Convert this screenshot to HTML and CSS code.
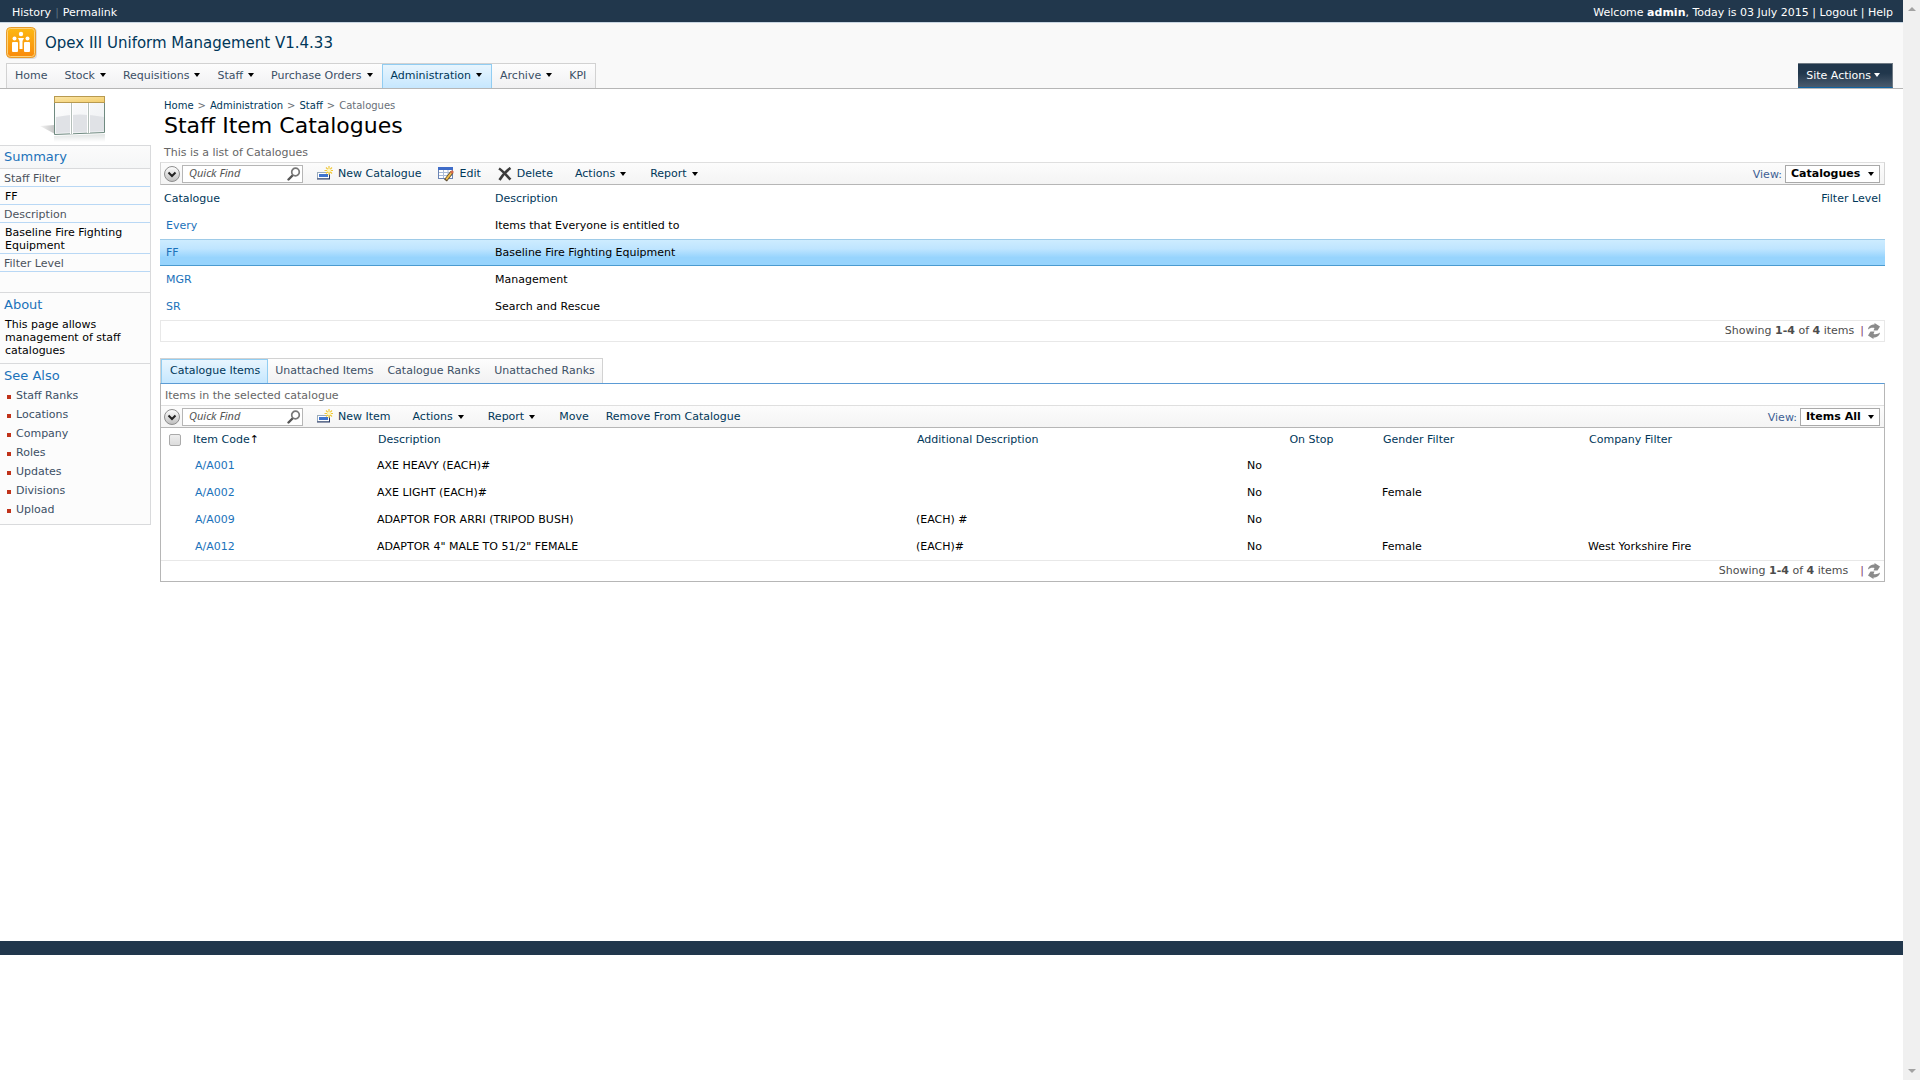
FILE: index.html
```
<!DOCTYPE html>
<html lang="en">
<head>
  <meta charset="UTF-8" />
  <meta name="viewport" content="width=device-width, initial-scale=1.0"/>
  <title>Staff Item Catalogues</title>
  <link rel="stylesheet" href="styles.css">
</head>
<body>
  <!-- shared icons -->
  <svg class="icon-defs" width="0" height="0" aria-hidden="true">
    <defs>
      <linearGradient id="orange" x1="0" y1="0" x2="0" y2="1">
        <stop offset="0" stop-color="#fdb913"/>
        <stop offset="1" stop-color="#f98a0c"/>
      </linearGradient>
      <linearGradient id="gold" x1="0" y1="0" x2="1" y2="1">
        <stop offset="0" stop-color="#fbe6a8"/>
        <stop offset="1" stop-color="#f3cd6c"/>
      </linearGradient>
      <linearGradient id="pane" x1="0" y1="0" x2="1" y2="1">
        <stop offset="0" stop-color="#ffffff"/>
        <stop offset="1" stop-color="#eceef1"/>
      </linearGradient>
      <linearGradient id="shade" x1="1" y1="0" x2="0" y2="0">
        <stop offset="0" stop-color="#c4c4c4"/>
        <stop offset="1" stop-color="#f4f4f4"/>
      </linearGradient>
      <linearGradient id="mirror" x1="0" y1="0" x2="0" y2="1">
        <stop offset="0" stop-color="#dfe3e2"/>
        <stop offset="1" stop-color="#ffffff"/>
      </linearGradient>
      <linearGradient id="ball" x1="0" y1="0" x2="0" y2="1">
        <stop offset="0" stop-color="#ffffff"/>
        <stop offset="1" stop-color="#bdbdbd"/>
      </linearGradient>
    </defs>
    <symbol id="i-find" viewBox="0 0 14 14">
      <path d="M1.500 12.500L6 8" stroke="#555" stroke-width="2.400" stroke-linecap="round"/>
      <circle cx="8.500" cy="5" r="3.800" fill="#fff" stroke="#777" stroke-width="1.700"/>
    </symbol>
    <symbol id="i-new" viewBox="0 0 16 16">
      <rect x="0.500" y="6.500" width="12" height="6" fill="#fff" stroke="#9ab"/>
      <path d="M0 13h13M12.500 8v5" stroke="#2a3a66" stroke-width="1"/>
      <rect x="2" y="8" width="9" height="3" fill="#3f74cf"/>
      <path d="M12 0v9M7.500 4.500h9M9 1.500l6 6M15 1.500l-6 6" stroke="#f0c83c" stroke-width="1.200"/>
      <circle cx="12" cy="4.500" r="2" fill="#fff7c0"/>
    </symbol>
    <symbol id="i-edit" viewBox="0 0 16 16">
      <rect x="0.500" y="1.500" width="14" height="11" fill="#fff" stroke="#6a84b4"/>
      <path d="M0 2.500h15" stroke="#3f6cc8" stroke-width="3"/>
      <path d="M1 6.500h13M1 9.500h13M5.500 4v8M10 4v8" stroke="#a9bbd8"/>
      <path d="M7.500 14.500L14 6" stroke="#5a4a30" stroke-width="3.600"/>
      <path d="M8.200 13.500L14 6" stroke="#f2bf4c" stroke-width="2"/>
      <path d="M13 7l2-2" stroke="#d4694c" stroke-width="2.600"/>
    </symbol>
    <symbol id="i-delete" viewBox="0 0 14 14">
      <path d="M1 1.500C5 4 9 9 12.500 12.500M12.500 1C8 4 4 9 1.500 13" stroke="#3c3c3c" stroke-width="2.600" fill="none"/>
    </symbol>
    <symbol id="i-more" viewBox="0 0 16 16">
      <circle cx="8" cy="8" r="7.500" fill="url(#ball)" stroke="#8e8e8e"/>
      <path d="M4.500 6.500L8 10l3.500-3.500" stroke="#222" stroke-width="2" fill="none"/>
    </symbol>
    <symbol id="i-refresh" viewBox="0 0 12 16">
      <path d="M0 6.500C0.500 3 3 1.500 6.500 1.500V0L12 3.500 9.500 7.500H5.500L6.500 5C4 4.500 2 5 0 6.500z" fill="#8b8b8b"/>
      <path d="M12 9.500c-0.500 3.500-3 5-6.500 5V16L0 12.500 2.500 8.500h4L5.500 11c2.500 0.500 4.500 0 6.500-1.500z" fill="#8b8b8b"/>
    </symbol>
  </svg>

  <div class="page">
    <div class="topbar">
      <div><a href="#">History</a><span class="bar">|</span><a href="#">Permalink</a></div>
      <div>Welcome <b>admin</b>, Today is 03 July 2015 | <a href="#">Logout</a> | <a href="#">Help</a></div>
    </div>

    <header class="header">
      <div class="brand">
        <svg width="32" height="32" viewBox="0 0 32 32" aria-hidden="true">
          <rect x="1" y="1" width="30" height="31" rx="4" fill="#ddd"/>
          <rect x="0.500" y="0.500" width="29" height="30" rx="4" fill="url(#orange)" stroke="#e89a2a"/>
          <rect x="1.500" y="1.500" width="27" height="28" rx="3" fill="none" stroke="#fdd37a"/>
          <g fill="#fff">
            <circle cx="8.500" cy="11.500" r="2"/><circle cx="15" cy="7" r="2.200"/><circle cx="21.500" cy="11.500" r="2"/>
            <rect x="6" y="15" width="6" height="10" rx="1"/><rect x="18" y="15" width="6" height="10" rx="1"/>
            <path d="M12 11h6l-1.500 3v8h-3v-8z"/>
          </g>
        </svg>
        <span>Opex III Uniform Management V1.4.33</span>
      </div>
      <div class="navrow">
        <nav class="nav">
          <a href="#">Home</a>
          <a href="#" class="drop">Stock</a>
          <a href="#" class="drop">Requisitions</a>
          <a href="#" class="drop">Staff</a>
          <a href="#" class="drop">Purchase Orders</a>
          <a href="#" class="drop active">Administration</a>
          <a href="#" class="drop">Archive</a>
          <a href="#">KPI</a>
        </nav>
        <button type="button" class="site-actions drop">Site Actions</button>
      </div>
    </header>

    <div class="content">
      <aside class="side">
        <div class="side-pic">
          <svg width="66" height="50" viewBox="0 0 66 50" aria-hidden="true">
            <path d="M0 31l15-1v9z" fill="url(#shade)"/>
            <path d="M14 41l51-2v8H14z" fill="url(#mirror)"/>
            <path d="M14.500 1.500h50v36l-50 2z" fill="url(#pane)" stroke="#6f8a80"/>
            <path d="M16 22q24-5 48 0v14l-48 2z" fill="#e0e2e6"/>
            <path d="M31.500 8v31M48.500 8v30" stroke="#fff" stroke-width="3"/>
            <path d="M31.500 8v31M48.500 8v30" stroke="#b4bfba"/>
            <rect x="14.500" y="1.500" width="50" height="6" fill="url(#gold)" stroke="#b89a50"/>
          </svg>
        </div>
        <div class="side-box">
          <h2 class="shaded">Summary</h2>
          <dl>
            <dt>Staff Filter</dt>
            <dd>FF</dd>
            <dt>Description</dt>
            <dd>Baseline Fire Fighting Equipment</dd>
            <dt>Filter Level</dt>
            <dd class="empty"></dd>
          </dl>
          <h2>About</h2>
          <p>This page allows management of staff catalogues</p>
          <h2>See Also</h2>
          <ul>
            <li><a href="#">Staff Ranks</a></li>
            <li><a href="#">Locations</a></li>
            <li><a href="#">Company</a></li>
            <li><a href="#">Roles</a></li>
            <li><a href="#">Updates</a></li>
            <li><a href="#">Divisions</a></li>
            <li><a href="#">Upload</a></li>
          </ul>
        </div>
      </aside>

      <main class="main">
        <div class="crumbs">
          <a href="#">Home</a><i>&gt;</i><a href="#">Administration</a><i>&gt;</i><a href="#">Staff</a><i>&gt;</i><span>Catalogues</span>
        </div>
        <h1>Staff Item Catalogues</h1>
        <p class="desc">This is a list of Catalogues</p>

        <div class="toolbar boxed">
          <button type="button" class="more" aria-label="Search options"><svg width="16" height="16"><use href="#i-more"/></svg></button>
          <div class="find">
            <input type="text" placeholder="Quick Find" aria-label="Quick find catalogues">
            <button type="button" aria-label="Find"><svg width="14" height="14"><use href="#i-find"/></svg></button>
          </div>
          <button type="button" class="tool near"><svg width="16" height="16"><use href="#i-new"/></svg>New Catalogue</button>
          <button type="button" class="tool near"><svg width="16" height="16"><use href="#i-edit"/></svg>Edit</button>
          <button type="button" class="tool"><svg width="14" height="14"><use href="#i-delete"/></svg>Delete</button>
          <button type="button" class="tool menu drop">Actions</button>
          <button type="button" class="tool menu drop">Report</button>
          <label class="view" for="catView">View:</label>
          <div class="pick drop">
            <select id="catView"><option>Catalogues</option></select>
          </div>
        </div>

        <table class="grid catalogues">
          <colgroup><col class="c-cat"><col><col class="c-level"></colgroup>
          <thead>
            <tr><th>Catalogue</th><th>Description</th><th class="right">Filter Level</th></tr>
          </thead>
          <tbody>
            <tr><td><a href="#">Every</a></td><td>Items that Everyone is entitled to</td><td></td></tr>
            <tr class="selected"><td><a href="#">FF</a></td><td>Baseline Fire Fighting Equipment</td><td></td></tr>
            <tr><td><a href="#">MGR</a></td><td>Management</td><td></td></tr>
            <tr><td><a href="#">SR</a></td><td>Search and Rescue</td><td></td></tr>
          </tbody>
        </table>
        <div class="pager boxed">
          <span>Showing <b>1-4</b> of <b>4</b> items</span>
          <span class="sep">|</span>
          <button type="button" aria-label="Refresh"><svg width="12" height="16"><use href="#i-refresh"/></svg></button>
        </div>

        <div class="tabs">
          <a href="#" class="active">Catalogue Items</a>
          <a href="#">Unattached Items</a>
          <a href="#">Catalogue Ranks</a>
          <a href="#">Unattached Ranks</a>
        </div>
        <div class="panel">
          <p class="desc">Items in the selected catalogue</p>
          <div class="toolbar">
            <button type="button" class="more" aria-label="Search options"><svg width="16" height="16"><use href="#i-more"/></svg></button>
            <div class="find">
              <input type="text" placeholder="Quick Find" aria-label="Quick find items">
              <button type="button" aria-label="Find"><svg width="14" height="14"><use href="#i-find"/></svg></button>
            </div>
            <button type="button" class="tool"><svg width="16" height="16"><use href="#i-new"/></svg>New Item</button>
            <button type="button" class="tool menu drop">Actions</button>
            <button type="button" class="tool menu drop">Report</button>
            <button type="button" class="tool near">Move</button>
            <button type="button" class="tool">Remove From Catalogue</button>
            <label class="view" for="itemView">View:</label>
            <div class="pick drop">
              <select id="itemView"><option>Items All</option></select>
            </div>
          </div>

          <table class="grid items">
            <colgroup><col class="c-check"><col class="c-code"><col class="c-desc"><col class="c-add"><col class="c-stop"><col class="c-gender"><col></colgroup>
            <thead>
              <tr>
                <th><input type="checkbox" aria-label="Select all items"></th>
                <th>Item Code<span class="sort">↑</span></th>
                <th>Description</th>
                <th>Additional Description</th>
                <th class="center">On Stop</th>
                <th>Gender Filter</th>
                <th>Company Filter</th>
              </tr>
            </thead>
            <tbody>
              <tr><td></td><td><a href="#">A/A001</a></td><td>AXE HEAVY (EACH)#</td><td></td><td>No</td><td></td><td></td></tr>
              <tr><td></td><td><a href="#">A/A002</a></td><td>AXE LIGHT (EACH)#</td><td></td><td>No</td><td>Female</td><td></td></tr>
              <tr><td></td><td><a href="#">A/A009</a></td><td>ADAPTOR FOR ARRI (TRIPOD BUSH)</td><td>(EACH) #</td><td>No</td><td></td><td></td></tr>
              <tr><td></td><td><a href="#">A/A012</a></td><td>ADAPTOR 4" MALE TO 51/2" FEMALE</td><td>(EACH)#</td><td>No</td><td>Female</td><td>West Yorkshire Fire</td></tr>
            </tbody>
          </table>
          <div class="pager">
            <span>Showing <b>1-4</b> of <b>4</b> items</span>
            <span class="sep wide">|</span>
            <button type="button" aria-label="Refresh"><svg width="12" height="16"><use href="#i-refresh"/></svg></button>
          </div>
        </div>
      </main>
    </div>

    <footer class="footer"></footer>
  </div>

  <div class="scroll">
    <span class="up"></span>
    <span class="down"></span>
  </div>
</body>
</html>
```
FILE: styles.css
```
* {
  box-sizing: border-box;
}
body {
  margin: 0;
  display: flex;
  min-height: 100vh;
  background: #fff;
  color: #000;
  font: 11px/14px Verdana, "DejaVu Sans", sans-serif;
}
a {
  color: inherit;
  text-decoration: none;
}
h1, h2, p, ul, dl, dd {
  margin: 0;
  padding: 0;
  font-weight: normal;
}
button, input, select {
  font: inherit;
  color: inherit;
  margin: 0;
  padding: 0;
  border: 0;
  background: none;
}
svg {
  display: block;
}
.icon-defs {
  position: absolute;
}
.page {
  flex: 1;
  min-width: 0;
}

/* small black triangle after menus */
.drop::after {
  content: "";
  display: inline-block;
  border: 3px solid transparent;
  border-top: 4px solid #000;
  border-bottom: 0;
  margin-left: 5px;
  vertical-align: 2px;
}

/* top */
.topbar {
  display: flex;
  justify-content: space-between;
  height: 22px;
  padding: 0 10px 0 12px;
  line-height: 25px;
  background: #21374c;
  color: #fff;
}
.topbar .bar {
  color: #5d6f80;
  margin: 0 4px;
}
.header {
  height: 67px;
  display: flex;
  flex-direction: column;
  justify-content: space-between;
  background: #f9f9f9;
  border-top: 1px solid #c9d6e2;
  border-bottom: 1px solid #b6b6b6;
}
.brand {
  display: flex;
  align-items: center;
  gap: 7px;
  height: 40px;
  padding: 0 6px;
  font-size: 15px;
  color: #003759;
}
.navrow {
  display: flex;
  justify-content: space-between;
  padding: 0 10px 0 6px;
}
.nav, .tabs {
  display: flex;
  width: max-content;
  height: 25px;
  line-height: 23px;
  color: #3b4f65;
  border: 1px solid #d2d2d2;
  border-bottom: 0;
  background: linear-gradient(#fdfdfd, #f1f1f2);
}
.nav a {
  padding: 0 9px 0 8px;
}
.nav .active, .tabs .active {
  color: #003759;
  border: solid #91cdf2;
  border-width: 1px 1px 0;
  line-height: 21px;
  background: linear-gradient(#e8f5fe, #c6e7fe);
}
.site-actions {
  height: 25px;
  padding: 0 12px 0 8px;
  color: #fff;
  background: linear-gradient(#21374c 40%, #4a5b6d);
  border: solid #6f7a84;
  border-width: 1px 1px 0 0;
  border-bottom: 1px solid #0f63a0;
}
.site-actions::after {
  border-top-color: #fff;
  margin-left: 3px;
}

/* content */
.content {
  display: flex;
  align-items: flex-start;
  min-height: calc(100vh - 228px);
}
.side {
  width: 151px;
}
.side-pic {
  height: 56px;
  padding: 6px 0 0 40px;
}
.side-box {
  border: solid #d9dadc;
  border-width: 1px 1px 1px 0;
  background: #fcfcfc;
  color: #000;
  line-height: 13px;
}
.side h2 {
  padding: 3px 4px 0;
  font-size: 13px;
  line-height: 18px;
  color: #1b72ba;
  border-top: 1px solid #d9dadc;
}
.side .shaded {
  height: 23px;
  padding-top: 2px;
  border-top: 0;
  border-bottom: 1px solid #d9dadc;
  background: linear-gradient(#fbfbfb, #f5f6f7);
}
.side dt, .side dd {
  padding: 3px 4px 1px;
  border-bottom: 1px solid #b9d8f5;
}
.side dt {
  color: #4c535c;
}
.side dd {
  padding-left: 5px;
}
.side dd.empty {
  height: 20px;
  border: 0;
}
.side p {
  padding: 4px 5px 6px;
}
.side ul {
  list-style: none;
  padding: 1px 0 5px;
}
.side li {
  display: flex;
  align-items: center;
  gap: 5px;
  height: 19px;
  padding-left: 7px;
  color: #3b4f65;
}
.side li::before {
  content: "";
  width: 4px;
  height: 4px;
  margin-top: 2px;
  background: #c0321a;
}
.main {
  flex: 1;
  min-width: 0;
  padding: 10px 18px 0 9px;
}
.crumbs {
  padding: 0 4px;
  font-size: 10px;
  color: #003759;
}
.crumbs i {
  font-style: normal;
  color: #6b6f74;
  margin: 0 4px;
}
.crumbs span {
  color: #697079;
}
h1 {
  padding: 0 4px;
  font-size: 22px;
  line-height: 25px;
}
.desc {
  color: #666;
  padding: 8px 4px 2px;
}

/* toolbars */
.toolbar {
  display: flex;
  align-items: center;
  height: 23px;
  padding: 0 4px 0 3px;
  color: #003759;
  background: linear-gradient(#fcfcfc, #f4f4f4);
  border-top: 1px solid #dfdfdf;
  border-bottom: 1px solid #b6b6b6;
}
.toolbar.boxed {
  border-left: 1px solid #d4d4d4;
  border-right: 1px solid #d4d4d4;
}
.find {
  display: flex;
  align-items: center;
  width: 121px;
  height: 18px;
  margin: 0 14px 0 2px;
  border: 1px solid #b6b6b6;
  background: #fff;
}
.find input {
  flex: 1;
  min-width: 0;
  height: 16px;
  padding: 0 0 2px 6px;
  font: italic 11px "Noto Sans", sans-serif;
  outline: 0;
}
.find input::placeholder {
  color: #555;
}
.find button {
  margin-right: 1px;
}
.tool {
  display: flex;
  align-items: center;
  gap: 5px;
  margin-right: 22px;
}
.tool.near {
  margin-right: 17px;
}
.tool.menu {
  gap: 0;
  margin-right: 24px;
}
.view {
  margin-left: auto;
  padding: 2px 3px 0 0;
  color: #3d5f94;
}
.pick {
  position: relative;
  height: 18px;
  border: 1px solid #a9a9a9;
  background: #fff;
}
.pick select {
  appearance: none;
  display: block;
  height: 16px;
  padding: 0 18px 0 5px;
  font-weight: bold;
  color: #000;
}
.pick::after {
  position: absolute;
  right: 5px;
  top: 6px;
  pointer-events: none;
}

/* tables */
.grid {
  width: 100%;
  table-layout: fixed;
  border-spacing: 0;
}
.grid th {
  height: 27px;
  padding: 0 4px;
  font-weight: normal;
  text-align: left;
  color: #003759;
}
.grid td {
  height: 27px;
  padding: 1px 3px 0;
}
.grid td a {
  color: #1b72ba;
}
.grid .right {
  text-align: right;
}
.grid .center {
  text-align: center;
}
.grid.items th {
  height: 24px;
}
.catalogues td {
  padding: 1px 4px 0;
}
.catalogues td:first-child, .items td:nth-child(2) {
  padding-left: 6px;
}
.selected td {
  background: linear-gradient(#cdecff, #bfe5ff 35%, #97d4fd 70%, #97d4fd);
  border-top: 1px solid #9ecbe8;
  border-bottom: 1px solid #4b9bd0;
}
.c-cat { width: 331px; }
.c-level { width: 120px; }
.c-check { width: 28px; }
.c-code { width: 185px; }
.c-desc { width: 539px; }
.c-add { width: 331px; }
.c-stop { width: 135px; }
.c-gender { width: 206px; }
.grid input {
  appearance: none;
  display: block;
  width: 12px;
  height: 12px;
  margin: 0 4px;
  border: 1px solid #aaa;
  border-radius: 2px;
  background: linear-gradient(#eee, #dcdcdc);
}
.sort {
  color: #000;
}
.pager {
  display: flex;
  justify-content: flex-end;
  align-items: center;
  height: 21px;
  padding-right: 4px;
  color: #4c4c4c;
  border-top: 1px solid #e8e8e8;
}
.pager.boxed {
  height: 22px;
  border: 1px solid #e8e8e8;
}
.pager .sep {
  color: #7a3c6e;
  margin: 0 4px 0 6px;
}
.pager .wide {
  margin-left: 12px;
}

/* lower panel */
.tabs {
  margin-top: 16px;
}
.tabs a {
  padding: 0 7px 0 8px;
}
.tabs a + a {
  padding-left: 7px;
}
.panel {
  border: 1px solid #b6b6b6;
  border-top-color: #5b9bd5;
}
.panel .desc {
  padding: 5px 4px 2px;
}
.footer {
  height: 14px;
  background: #21374c;
}

/* scroll gutter */
.scroll {
  display: flex;
  flex-direction: column;
  justify-content: space-between;
  align-items: center;
  width: 17px;
  padding: 7px 0;
  background: #f0f0f0;
}
.scroll span {
  border: 4px solid transparent;
}
.scroll .up {
  border-top: 0;
  border-bottom-color: #a3a3a3;
}
.scroll .down {
  border-bottom: 0;
  border-top-color: #a3a3a3;
}
```
